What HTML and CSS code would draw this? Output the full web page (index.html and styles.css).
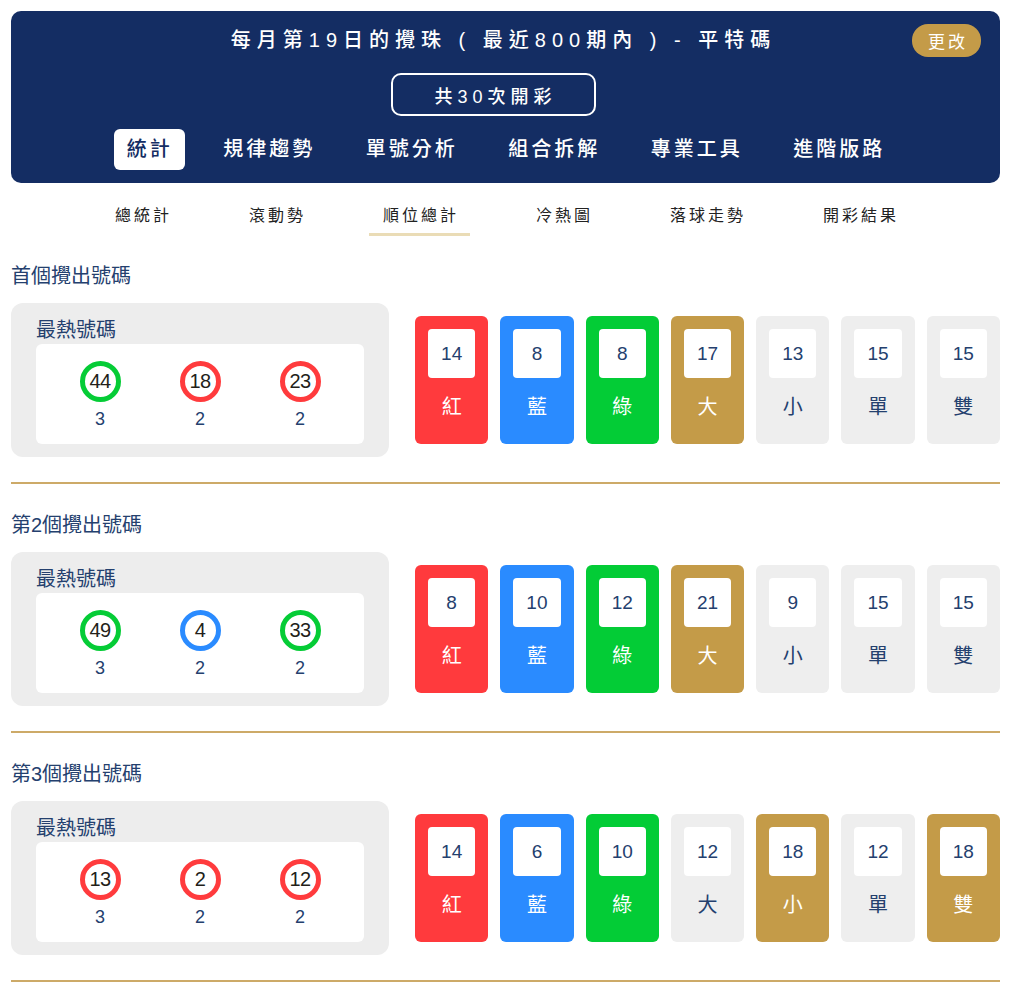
FILE: index.html
```html
<!DOCTYPE html>
<html lang="zh-Hant">
<head>
<meta charset="utf-8">
<title>平特碼 順位總計</title>
<link rel="stylesheet" href="styles.css">
</head>
<body>
<div class="page">
  <header class="hero">
    <div class="hero-top">
      <span class="spacer"></span>
      <h1 class="hero-title">每月第19日的攪珠 ( 最近800期內 ) - 平特碼</h1>
      <button class="change-btn">更改</button>
    </div>
    <div class="count-pill">共30次開彩</div>
    <nav class="main-tabs">
      <a class="main-tab active">統計</a>
      <a class="main-tab">規律趨勢</a>
      <a class="main-tab">單號分析</a>
      <a class="main-tab">組合拆解</a>
      <a class="main-tab">專業工具</a>
      <a class="main-tab">進階版路</a>
    </nav>
  </header>

  <nav class="sub-tabs">
    <a class="sub-tab">總統計</a>
    <a class="sub-tab">滾動勢</a>
    <a class="sub-tab active">順位總計</a>
    <a class="sub-tab">冷熱圖</a>
    <a class="sub-tab">落球走勢</a>
    <a class="sub-tab">開彩結果</a>
  </nav>

  <section class="pos-section">
    <h2 class="pos-title">首個攪出號碼</h2>
    <div class="pos-row">
      <div class="hot-card">
        <div class="hot-title">最熱號碼</div>
        <div class="hot-box">
          <div class="hot-item"><div class="ball green">44</div><div class="hot-count">3</div></div>
          <div class="hot-item"><div class="ball red">18</div><div class="hot-count">2</div></div>
          <div class="hot-item"><div class="ball red">23</div><div class="hot-count">2</div></div>
        </div>
      </div>
      <div class="stat-cards">
        <div class="stat-card red"><div class="stat-num">14</div><div class="stat-label">紅</div></div>
        <div class="stat-card blue"><div class="stat-num">8</div><div class="stat-label">藍</div></div>
        <div class="stat-card green"><div class="stat-num">8</div><div class="stat-label">綠</div></div>
        <div class="stat-card gold"><div class="stat-num">17</div><div class="stat-label">大</div></div>
        <div class="stat-card gray"><div class="stat-num">13</div><div class="stat-label">小</div></div>
        <div class="stat-card gray"><div class="stat-num">15</div><div class="stat-label">單</div></div>
        <div class="stat-card gray"><div class="stat-num">15</div><div class="stat-label">雙</div></div>
      </div>
    </div>
  </section>

  <section class="pos-section">
    <h2 class="pos-title">第2個攪出號碼</h2>
    <div class="pos-row">
      <div class="hot-card">
        <div class="hot-title">最熱號碼</div>
        <div class="hot-box">
          <div class="hot-item"><div class="ball green">49</div><div class="hot-count">3</div></div>
          <div class="hot-item"><div class="ball blue">4</div><div class="hot-count">2</div></div>
          <div class="hot-item"><div class="ball green">33</div><div class="hot-count">2</div></div>
        </div>
      </div>
      <div class="stat-cards">
        <div class="stat-card red"><div class="stat-num">8</div><div class="stat-label">紅</div></div>
        <div class="stat-card blue"><div class="stat-num">10</div><div class="stat-label">藍</div></div>
        <div class="stat-card green"><div class="stat-num">12</div><div class="stat-label">綠</div></div>
        <div class="stat-card gold"><div class="stat-num">21</div><div class="stat-label">大</div></div>
        <div class="stat-card gray"><div class="stat-num">9</div><div class="stat-label">小</div></div>
        <div class="stat-card gray"><div class="stat-num">15</div><div class="stat-label">單</div></div>
        <div class="stat-card gray"><div class="stat-num">15</div><div class="stat-label">雙</div></div>
      </div>
    </div>
  </section>

  <section class="pos-section">
    <h2 class="pos-title">第3個攪出號碼</h2>
    <div class="pos-row">
      <div class="hot-card">
        <div class="hot-title">最熱號碼</div>
        <div class="hot-box">
          <div class="hot-item"><div class="ball red">13</div><div class="hot-count">3</div></div>
          <div class="hot-item"><div class="ball red">2</div><div class="hot-count">2</div></div>
          <div class="hot-item"><div class="ball red">12</div><div class="hot-count">2</div></div>
        </div>
      </div>
      <div class="stat-cards">
        <div class="stat-card red"><div class="stat-num">14</div><div class="stat-label">紅</div></div>
        <div class="stat-card blue"><div class="stat-num">6</div><div class="stat-label">藍</div></div>
        <div class="stat-card green"><div class="stat-num">10</div><div class="stat-label">綠</div></div>
        <div class="stat-card gray"><div class="stat-num">12</div><div class="stat-label">大</div></div>
        <div class="stat-card gold"><div class="stat-num">18</div><div class="stat-label">小</div></div>
        <div class="stat-card gray"><div class="stat-num">12</div><div class="stat-label">單</div></div>
        <div class="stat-card gold"><div class="stat-num">18</div><div class="stat-label">雙</div></div>
      </div>
    </div>
  </section>
</div>
</body>
</html>
```

FILE: styles.css
```css
* { box-sizing: border-box; }

html, body {
  margin: 0;
  padding: 0;
  background: #ffffff;
}

body {
  font-family: "Liberation Sans", "Noto Sans CJK TC", sans-serif;
  color: #222222;
}

.page {
  padding: 11px 23px 0 11px;
}

/* ---------- header ---------- */
.hero {
  background: #142d63;
  border-radius: 10px;
  padding: 13px 19px 13px 19px;
  display: flex;
  flex-direction: column;
  align-items: center;
  color: #ffffff;
}

.hero-top {
  align-self: stretch;
  display: grid;
  grid-template-columns: 1fr auto 1fr;
  align-items: center;
}

.hero-title {
  margin: 0;
  font-size: 20px;
  font-weight: 500;
  line-height: 33px;
  letter-spacing: 6px;
  white-space: pre;
  padding-right: 4px;
}

.change-btn {
  justify-self: end;
  border: none;
  background: #c49b48;
  color: #ffffff;
  font-family: inherit;
  font-size: 17px;
  letter-spacing: 3px;
  height: 33px;
  width: 69px;
  padding: 0 0 0 3px;
  border-radius: 16px;
}

.count-pill {
  margin-top: 16px;
  margin-right: 25px;
  height: 43px;
  width: 205px;
  border: 2px solid #ffffff;
  border-radius: 10px;
  display: flex;
  align-items: center;
  justify-content: center;
  font-size: 18px;
  font-weight: 500;
  letter-spacing: 5px;
  padding-left: 5px;
}

.main-tabs {
  margin-top: 13px;
  display: flex;
  gap: 25.5px;
}

.main-tab {
  height: 41px;
  line-height: 41px;
  padding: 0 12px 0 13px;
  font-size: 20px;
  font-weight: 500;
  letter-spacing: 3px;
  border-radius: 6px;
  color: #ffffff;
}

.main-tab.active {
  background: #ffffff;
  color: #142d63;
}

/* ---------- sub tabs ---------- */
.sub-tabs {
  margin-top: 21px;
  display: flex;
  justify-content: center;
  gap: 52px;
}

.sub-tab {
  padding: 0 11px 5px 14px;
  font-size: 16px;
  line-height: 24px;
  letter-spacing: 3px;
  color: #222222;
  border-bottom: 3px solid transparent;
}

.sub-tab.active {
  border-bottom-color: #eadcb6;
}

/* ---------- sections ---------- */
.pos-section {
  margin-top: 25px;
  padding-bottom: 25px;
  border-bottom: 2px solid #cdaa68;
}

.pos-section + .pos-section {
  margin-top: 26px;
}

.pos-title {
  margin: 0 0 12px;
  font-size: 20px;
  font-weight: normal;
  line-height: 30px;
  color: #24406e;
}

.pos-row {
  display: flex;
  align-items: center;
  gap: 26px;
}

.hot-card {
  width: 378px;
  flex: none;
  background: #ededed;
  border-radius: 12px;
  padding: 13px 25px;
}

.hot-title {
  font-size: 20px;
  line-height: 28px;
  color: #24406e;
}

.hot-box {
  background: #ffffff;
  border-radius: 6px;
  height: 100px;
  padding-top: 17px;
  display: flex;
  justify-content: center;
}

.hot-item {
  width: 100px;
  display: flex;
  flex-direction: column;
  align-items: center;
}

.ball {
  width: 41px;
  height: 41px;
  border-radius: 50%;
  border: 5px solid #ff3b3d;
  background: #ffffff;
  font-size: 20px;
  line-height: 31px;
  text-align: center;
  color: #231f1a;
  letter-spacing: -0.5px;
}

.ball.red { border-color: #ff3b3d; }
.ball.green { border-color: #05cc36; }
.ball.blue { border-color: #2a8bff; }

.hot-count {
  margin-top: 6px;
  font-size: 18px;
  line-height: 22px;
  color: #24406e;
}

.stat-cards {
  flex: 1;
  display: flex;
  gap: 12px;
}

.stat-card {
  flex: 1 1 0;
  height: 128px;
  border-radius: 6px;
  padding: 13px 13px 0;
  display: flex;
  flex-direction: column;
  align-items: stretch;
  color: #ffffff;
}

.stat-card.red { background: #ff3a3d; }
.stat-card.blue { background: #2a8bff; }
.stat-card.green { background: #03cc36; }
.stat-card.gold { background: #c49b48; }
.stat-card.gray { background: #eeeeee; color: #24406e; }

.stat-num {
  background: #ffffff;
  border-radius: 4px;
  height: 49px;
  line-height: 49px;
  text-align: center;
  font-size: 19px;
  color: #24406e;
}

.stat-label {
  margin-top: 15px;
  font-size: 20px;
  line-height: 28px;
  text-align: center;
}
```
